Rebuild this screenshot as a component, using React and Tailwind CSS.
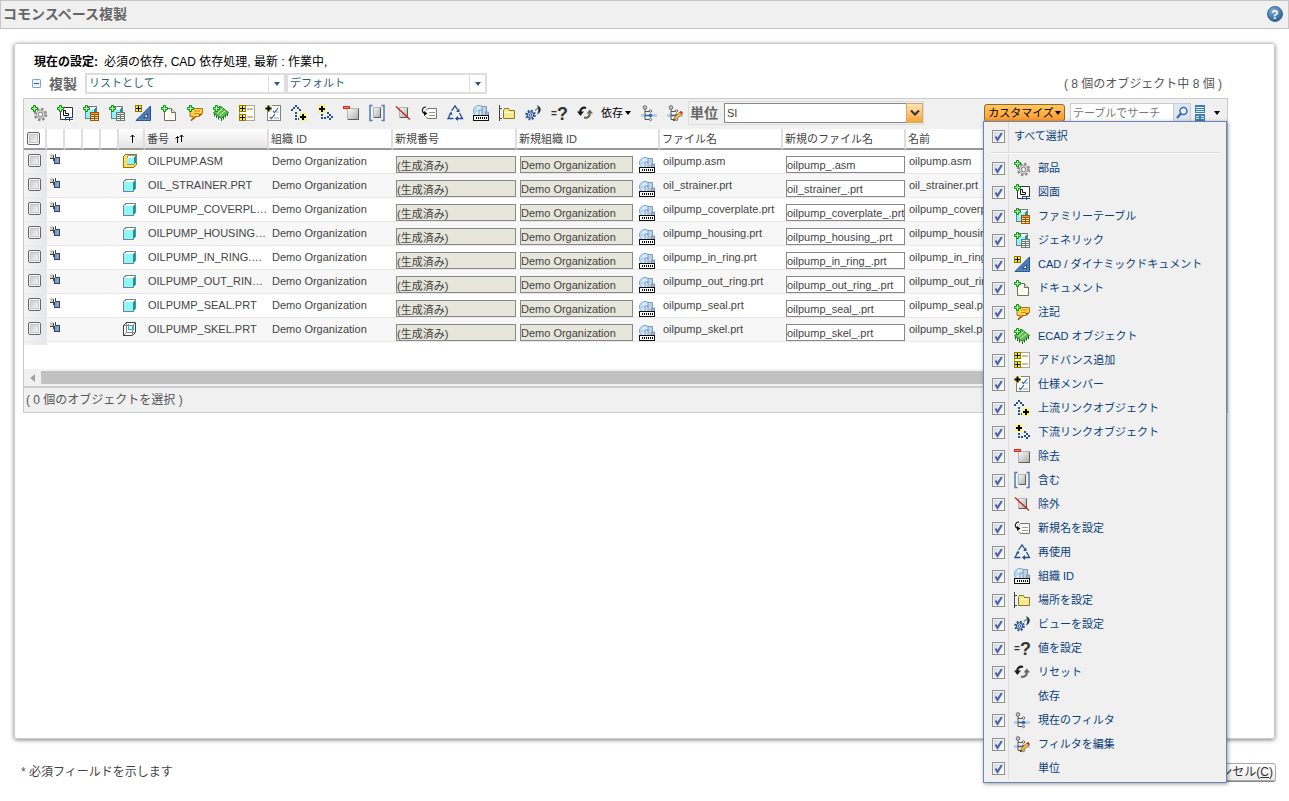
import { useState } from "react";

const GreenPlus = () => (
  <path d="M2.5.5h2v2h2v2h-2v2h-2v-2h-2v-2h2z" fill="#a5f58a" stroke="#0b8f1c" />
);

const YellowPlus = ({ y = 0 }) => (
  <g transform={`translate(0 ${y})`} shapeRendering="crispEdges">
    <rect width="7" height="7" fill="#8a7c00" />
    <rect x="1" y="1" width="5" height="5" fill="#ffee22" />
    <path d="M3 1h1v2h2v1H4v2H3V4H1V3h2z" fill="#000" />
  </g>
);

const Cube = () => (
  <g shapeRendering="crispEdges">
    <path d="M2 4l2-2h9v9l-2 2H2z" fill="#fff" />
    <path d="M3 5h8v8H3z" fill="#8ef6f8" />
    <path d="M11 4l2-2v9l-2 2z" fill="#0e9a9c" />
    <path d="M2.500 13.500V4.500L5 1.500h8.500V12M2 13.500h6" fill="none" stroke="#6d8080" />
  </g>
);

const Grid = ({ head, body, line }) => (
  <g shapeRendering="crispEdges">
    <rect x="7" y="7" width="9" height="9" fill={line} />
    <path d="M8 8h7v1H8z" fill={head} />
    <path d="M8 10h3v1H8zM12 10h3v1h-3zM8 12h3v1H8zM12 12h3v1h-3zM8 14h3v1H8zM12 14h3v1h-3z" fill={body} />
  </g>
);

const Box = ({ x = 5, y = 3, w = 9, h = 11 }) => (
  <g>
    <rect x={x} y={y} width={w} height={h} fill="url(#steel)" />
    <path d={`M${x} ${y + h - 0.5}h${w}M${x + w - 0.5} ${y}v${h}`} stroke="#5c5c5c" />
    <path d={`M${x + 0.5} ${y + h}V${y + 0.5}h${w}`} fill="none" stroke="#b5b5b5" />
  </g>
);

const FilterTree = () => (
  <g>
    <path d="M0 9h16v3H0z" fill="#b9cdea" />
    <path d="M4 4v10.500h4M4 6.500h4M4 10.500h4" fill="none" stroke="#555" />
    <circle cx="4" cy="2.500" r="1.800" fill="#ccc" stroke="#666" />
    <circle cx="9.500" cy="6" r="1.200" fill="#fff" stroke="#555" strokeWidth=".9" />
    <circle cx="9.500" cy="10.500" r="1.300" fill="#2f6fe0" stroke="#1d4fb8" />
    <circle cx="9.500" cy="14.500" r="1.100" fill="#fff" stroke="#555" strokeWidth=".9" />
  </g>
);

const glyphs = {
  part: (
    <>
      <circle cx="9.500" cy="9.500" r="5.500" fill="none" stroke="#8a8a8a" strokeWidth="2.400" strokeDasharray="2.300 2.020" />
      <circle cx="9.500" cy="9.500" r="4.300" fill="#d9d9d9" stroke="#999" />
      <circle cx="9.500" cy="9.500" r="2.200" fill="#fff" stroke="#777" />
      <GreenPlus />
    </>
  ),
  drawing: (
    <>
      <path d="M3.500 2.500h12v12h-12z" fill="#fff" stroke="#333" />
      <path d="M6.500 5v5.500h5V8.500H8.500V5.500H6" fill="none" stroke="#111" />
      <path d="M8 12h8v4H8z" fill="#fff" />
      <path d="M8 12.500h8M8.500 12v3.500M9 14.500h7M12.500 12v4" stroke="#17469e" />
      <GreenPlus />
    </>
  ),
  family: (
    <>
      <Cube />
      <Grid head="#f59a23" body="#fff3a8" line="#a3530c" />
      <GreenPlus />
    </>
  ),
  generic: (
    <>
      <Cube />
      <Grid head="#d9ddda" body="#fff" line="#6d7a74" />
      <GreenPlus />
    </>
  ),
  cad: (
    <>
      <path d="M15.500 1v14.500H1z" fill="#4d7cb8" stroke="#234f8f" />
      <path d="M12.500 8.500v4H8.500z" fill="#fff" stroke="#234f8f" />
      <path d="M4 15.500l1-1.500M7 15.500l1-1.500M10 15.500l1-1.500M13 15.500l1-1.500" stroke="#8fb2dd" strokeWidth=".7" />
      <YellowPlus />
    </>
  ),
  document: (
    <>
      <path d="M3.500 3.500h7l4 4v8h-11z" fill="#fffff4" stroke="#6e6e62" />
      <path d="M10.500 3.500v4h4" fill="#e4e4d4" stroke="#6e6e62" />
      <GreenPlus />
    </>
  ),
  note: (
    <>
      <path d="M3 3.500h12.500v5L12 11.500H9L4 16l2.500-4.500H3z" fill="#fbd04a" stroke="#b87412" />
      <path d="M4 15.500L9 11.500" stroke="#a7570b" strokeWidth="1.300" />
      <path d="M7 6h6M7 8.500h5" stroke="#c88a1c" strokeWidth=".9" />
      <path d="M12 11.500V9l3.500-.5z" fill="#8a4a08" />
      <GreenPlus />
    </>
  ),
  ecad: (
    <>
      <path d="M7 1l8.500 6.500-7 6L.5 8z" fill="#5cbc4e" stroke="#1d7a22" />
      <path d="M4 8.500l5.500-5M6.500 10.500l6-5" stroke="#d9f7cd" />
      <path d="M1.500 9v2.500M3.500 10.500V13M5.500 12v2.500M8.500 13.500v2.500M10.500 12v2.500M12.500 10v2.500M14.500 8.500V11" stroke="#176b1c" />
      <GreenPlus />
    </>
  ),
  advance: (
    <>
      <rect x=".5" y=".5" width="15" height="15" fill="#fffff0" stroke="#a9a99e" />
      <path d="M8 4h6M8 12h6" stroke="#aaa" strokeWidth="1.600" />
      <YellowPlus />
      <YellowPlus y={9} />
    </>
  ),
  spec: (
    <>
      <rect x="2.500" y=".5" width="13" height="15" fill="#fffff4" stroke="#83837a" />
      <path d="M8 6l1.500 1.500L13 3M5 12l1.500 1.500L10 9" fill="none" stroke="#2e67b1" strokeWidth="1.200" />
      <path d="M11 7h3M9 13h5" stroke="#89a7cf" />
      <path d="M0 0h7v7H0z" fill="#f3ef9b" />
      <path d="M2.500.5h2v2h2v2h-2v2h-2v-2h-2v-2h2z" fill="#000" />
    </>
  ),
  upstream: (
    <>
      <path d="M4 0h2v2H4zM2 2h2v2H2zM6 2h2v2H6zM0 4h2v2H0zM8 4h2v2H8zM4 7h2v2H4zM4 10h2v2H4zM4 13h2v2H4zM7 13h1v2H7z" fill="#22538f" />
      <path d="M8 8h8v8H8z" fill="#fbf48a" />
      <path d="M11 9h2v2h2v2h-2v2h-2v-2H9v-2h2z" fill="#000" />
    </>
  ),
  downstream: (
    <>
      <path d="M4 9h2v2H4zM4 12h2v2H4zM7 12h2v2H7zM10 11h2v2h-2zM10 7h2v2h-2zM12 9h2v2h-2zM14 11h2v2h-2zM12 13h2v2h-2z" fill="#22538f" />
      <path d="M1 0h8v8H1z" fill="#fbf48a" />
      <path d="M4 1h2v2h2v2H6v2H4V5H2V3h2z" fill="#000" />
    </>
  ),
  remove: (
    <>
      <Box x={4} y={3} w={12} h={12} />
      <path d="M0 1h7v3H0z" fill="#d92b1c" />
      <path d="M1 2h5v1H1z" fill="#ff7b6b" />
    </>
  ),
  include: (
    <>
      <Box x={4} y={2} w={8} h={11} />
      <path d="M3.500.5H1v15h2.500M12.500.5H15v15h-2.500" fill="none" stroke="#4d7cb0" strokeWidth="1.500" />
    </>
  ),
  exclude: (
    <>
      <Box x={4} y={2} w={9} h={11} />
      <path d="M1 1.500l14 13" stroke="#c8261c" strokeWidth="1.400" />
    </>
  ),
  rename: (
    <>
      <path d="M5 5.500L6.500 3.500h9v10h-9L5 11.500" fill="#fffff8" stroke="#777" />
      <path d="M8 7.500h6M8 10.500h6" stroke="#999" />
      <path d="M5 2C1 2 0 6.500 3.500 8.500" fill="none" stroke="#111" strokeWidth="1.100" />
      <path d="M3 6l3.500 2.500L3 11z" fill="#111" />
    </>
  ),
  reuse: (
    <>
      <path d="M4.500 6L8 1l3.500 5M12.500 8l3 5.500H9M6.500 13.500H1L4 7.500" fill="none" stroke="#1f4f93" strokeWidth="1.300" />
      <path d="M12.500 3.500v3.500H9zM11 11v5l-3-2.500zM2 9l2.500-2 1 3z" fill="#1f4f93" />
    </>
  ),
  org: (
    <>
      <circle cx="6" cy="6" r="5.500" fill="#d4ecfa" stroke="#7aa3c4" />
      <path d="M2 3c2 1 2 3 0 5M1 6h6" fill="none" stroke="#a9cde6" />
      <path d="M6 5h4v6H6z" fill="#d8e8f5" stroke="#6f90b3" strokeWidth=".9" />
      <path d="M9 1.500h4.500V11H9z" fill="#bfd2e6" stroke="#6f90b3" strokeWidth=".9" />
      <path d="M12.500 7h3v4h-3z" fill="#9fb7d1" stroke="#6f90b3" strokeWidth=".9" />
      <g shapeRendering="crispEdges">
        <rect x="0" y="10" width="16" height="6" fill="#111" />
        <rect x="1" y="11" width="14" height="4" fill="#fff" />
        <path d="M3 12h1v2H3zM5 12h1v2H5zM7 12h1v2H7zM9 12h1v2H9zM11 12h1v2h-1zM13 12h1v2h-1z" fill="#000" />
      </g>
    </>
  ),
  location: (
    <>
      <path d="M.5 0v16M0 3.500h3M0 13.500h3" fill="none" stroke="#444" />
      <path d="M4.500 5.500l1-2h4l1 2h5v8h-11z" fill="#f6e88b" stroke="#857a2e" />
      <path d="M5.500 7.500h9" stroke="#fffbd0" />
    </>
  ),
  view: (
    <>
      <circle cx="5.500" cy="10" r="4.300" fill="none" stroke="#254e86" strokeWidth="2" strokeDasharray="1.800 1.570" />
      <circle cx="5.500" cy="10" r="3.200" fill="#b5cbe6" stroke="#254e86" />
      <circle cx="5.500" cy="10" r="1.200" fill="#fff" stroke="#254e86" strokeWidth=".9" />
      <path d="M12 0c5 2 5 7 0 9.500 1.800-3.500 1.800-6 0-9.500z" fill="#2b3340" />
      <path d="M10 5.500l3-2.500" stroke="#5a88c4" strokeWidth="1.400" />
    </>
  ),
  value: (
    <>
      <text x="0" y="12" fontSize="10" fontWeight="bold" fill="#333">=</text>
      <text x="6" y="15" fontSize="18" fontWeight="bold" fill="#333">?</text>
    </>
  ),
  reset: (
    <>
      <path d="M9 3C5.500 2 3 4 3.200 7.500" fill="none" stroke="#1c1c1c" strokeWidth="2.200" />
      <path d="M0 6.500h7L3.400 11z" fill="#1c1c1c" />
      <path d="M7 12.500c3.500 1 6-1 5.800-4.500" fill="none" stroke="#676b60" strokeWidth="2.200" />
      <path d="M9.500 8.500H16L12.800 4.500z" fill="#676b60" />
    </>
  ),
  filter: <FilterTree />,
  editFilter: (
    <>
      <FilterTree />
      <path d="M6.500 15.500l1-3.500 6-5.500 2 2-6 5.500z" fill="#f9c43c" stroke="#8f5d0e" strokeWidth=".8" />
      <path d="M12.500 7.300l1.800-1.300 1.500 1.500-1.300 1.800z" fill="#d3331f" />
      <path d="M6 16l.7-2 1.500 1.400z" fill="#222" />
    </>
  ),
  assembly: (
    <g shapeRendering="crispEdges">
      <path d="M1.500 3.500l2-2h11v10l-3 3h-10z" fill="#ffdf5c" stroke="#a5700c" />
      <path d="M5 4l2-2h7v7l-2 2H5z" fill="#fff" stroke="#6f8a8c" strokeWidth=".8" />
      <path d="M5 5h7v6H5z" fill="#8ef6f8" />
      <path d="M12 4l2-2v7l-2 2z" fill="#0e9a9c" />
    </g>
  ),
  solid: (
    <g shapeRendering="crispEdges">
      <path d="M1 5l3-3h10l-3 3z" fill="#fff" />
      <path d="M1 5h10v9H1z" fill="#8ef6f8" />
      <path d="M11 5l3-3v9l-3 3z" fill="#0e9a9c" />
      <path d="M1.500 14V4.500l2.500-2h9.500V11l-2 3H1" fill="none" stroke="#6f8a8c" />
    </g>
  ),
  skeleton: (
    <g fill="none" shapeRendering="crispEdges">
      <path d="M1.500 4.500l3-3h9v10l-3 3h-9z" fill="#fff" stroke="#444" />
      <path d="M1.500 4.500h9v10M10.500 4.500l3-3M4.500 2v9h9M1.500 14.500l3-3" stroke="#888" />
      <path d="M6.500 3v5h5V4" stroke="#19c0c4" />
    </g>
  ),
};

const actions = [
  ["part", "部品"],
  ["drawing", "図面"],
  ["family", "ファミリーテーブル"],
  ["generic", "ジェネリック"],
  ["cad", "CAD / ダイナミックドキュメント"],
  ["document", "ドキュメント"],
  ["note", "注記"],
  ["ecad", "ECAD オブジェクト"],
  ["advance", "アドバンス追加"],
  ["spec", "仕様メンバー"],
  ["upstream", "上流リンクオブジェクト"],
  ["downstream", "下流リンクオブジェクト"],
  ["remove", "除去"],
  ["include", "含む"],
  ["exclude", "除外"],
  ["rename", "新規名を設定"],
  ["reuse", "再使用"],
  ["org", "組織 ID"],
  ["location", "場所を設定"],
  ["view", "ビューを設定"],
  ["value", "値を設定"],
  ["reset", "リセット"],
  [null, "依存"],
  ["filter", "現在のフィルタ"],
  ["editFilter", "フィルタを編集"],
  [null, "単位"],
];

const rows = [
  { number: "OILPUMP.ASM", file: "oilpump.asm", newFile: "oilpump_.asm", icon: "assembly" },
  { number: "OIL_STRAINER.PRT", file: "oil_strainer.prt", newFile: "oil_strainer_.prt", icon: "solid" },
  { number: "OILPUMP_COVERPLATE.PRT", file: "oilpump_coverplate.prt", newFile: "oilpump_coverplate_.prt", icon: "solid" },
  { number: "OILPUMP_HOUSING.PRT", file: "oilpump_housing.prt", newFile: "oilpump_housing_.prt", icon: "solid" },
  { number: "OILPUMP_IN_RING.PRT", file: "oilpump_in_ring.prt", newFile: "oilpump_in_ring_.prt", icon: "solid" },
  { number: "OILPUMP_OUT_RING.PRT", file: "oilpump_out_ring.prt", newFile: "oilpump_out_ring_.prt", icon: "solid" },
  { number: "OILPUMP_SEAL.PRT", file: "oilpump_seal.prt", newFile: "oilpump_seal_.prt", icon: "solid" },
  { number: "OILPUMP_SKEL.PRT", file: "oilpump_skel.prt", newFile: "oilpump_skel_.prt", icon: "skeleton" },
];

function Icon({ name }) {
  return (
    <svg viewBox="0 0 16 16" className="block size-4 shrink-0 overflow-visible" aria-hidden="true">
      {glyphs[name]}
    </svg>
  );
}

function Caret() {
  return <span className="block border-x-[3px] border-t-[4px] border-x-transparent border-t-current" />;
}

function RowCheckbox({ label }) {
  return (
    <input
      type="checkbox"
      aria-label={label}
      className="block size-[13px] appearance-none rounded-[2px] border border-[#666] bg-linear-to-br from-[#c4c4c4] to-white shadow-[inset_0_0_0_1px_#fff,inset_0_0_0_2px_#c4c4c4] checked:from-[#4b62a8]"
    />
  );
}

function MenuCheckbox({ id, checked, onChange }) {
  return (
    <span className="relative block size-[13px] shrink-0">
      <input
        type="checkbox"
        id={id}
        checked={checked}
        onChange={onChange}
        className="block size-full appearance-none border border-[#8e8f8f] bg-linear-to-br from-[#cfd3da] to-white shadow-[inset_0_0_0_1px_#f6f6f6]"
      />
      {checked && (
        <svg viewBox="0 0 13 13" className="pointer-events-none absolute inset-0" aria-hidden="true">
          <path d="M3.500 6.500l2 3.500L9.800 3" fill="none" stroke="#4b61a4" strokeWidth="2" />
        </svg>
      )}
    </span>
  );
}

function PlainSelect({ label, value }) {
  return (
    <div className="relative h-[21px] w-[201px] border-2 border-[#ddd] bg-white">
      <select aria-label={label} className="block size-full appearance-none px-0.5 text-[11px] leading-[17px] text-[#2b5d7c]">
        <option>{value}</option>
      </select>
      <span className="pointer-events-none absolute inset-y-0 right-0 grid w-4 place-items-center border-l border-[#ddd] text-[#2b5d7c]">
        <Caret />
      </span>
    </div>
  );
}

function CustomizeMenu() {
  const [hidden, setHidden] = useState([]);

  const toggle = (label) =>
    setHidden(hidden.includes(label) ? hidden.filter((l) => l !== label) : [...hidden, label]);
  const toggleAll = () => setHidden(hidden.length ? [] : actions.map(([, label]) => label));

  return (
    <div className="absolute top-full -left-px z-20 -mt-px w-[244px] border border-[#6a86b8] bg-[#f0f0f0] pb-0.5 text-[11px] text-[#0a3f7a] shadow-[1px_1px_4px_rgba(0,0,0,0.4)]">
      <div className="flex h-7 items-center">
        <span className="flex h-full w-[25px] items-center border-r border-[#dcdcdc] pl-2">
          <MenuCheckbox id="all" checked={!hidden.length} onChange={toggleAll} />
        </span>
        <label htmlFor="all" className="pl-[5px]">すべて選択</label>
      </div>
      <div className="flex h-[6px]">
        <span className="w-[25px] border-r border-[#dcdcdc]" />
        <span className="mt-0.5 mr-1.5 -ml-[18px] h-0.5 flex-1 border-t border-b border-t-[#dcdcdc] border-b-white" />
      </div>
      {actions.map(([icon, label], i) => (
        <div key={label} className="flex h-6 items-center">
          <span className="flex h-full w-[25px] items-center border-r border-[#dcdcdc] pl-2">
            <MenuCheckbox id={`action-${i}`} checked={!hidden.includes(label)} onChange={() => toggle(label)} />
          </span>
          <label htmlFor={`action-${i}`} className="flex items-center gap-2 pl-[5px]">
            <Icon name={icon} />
            {label}
          </label>
        </div>
      ))}
    </div>
  );
}

function Toolbar() {
  const [open, setOpen] = useState(true);
  const tools = actions.slice(0, 22);

  return (
    <div className="flex h-[30px] items-center bg-[#f0f0f0] pr-[7px] pb-0.5 pl-0.5">
      {tools.map(([icon, label]) => (
        <button key={label} aria-label={label} className="grid h-6 w-[26px] shrink-0 place-items-center">
          <Icon name={icon} />
        </button>
      ))}
      <button className="flex h-6 w-[38px] shrink-0 items-center gap-0.5 pl-[3px] text-[11px] text-black">
        依存
        <Caret />
      </button>
      {actions.slice(23, 25).map(([icon, label]) => (
        <button key={label} aria-label={label} className="grid h-6 w-[26px] shrink-0 place-items-center">
          <Icon name={icon} />
        </button>
      ))}
      <div className="flex h-6 w-[236px] items-center border border-[#ddd]">
        <label htmlFor="unit" className="w-[35px] shrink-0 pl-px text-sm font-bold text-[#666]">単位</label>
        <div className="relative h-5 flex-1">
          <select id="unit" className="block size-full appearance-none border border-[#888] bg-white px-0.5 text-[11px] text-[#444]">
            <option>SI</option>
          </select>
          <span className="pointer-events-none absolute inset-y-0 right-0 grid w-[17px] place-items-center border border-[#d8a860] bg-linear-to-b from-[#ffe3b3] to-[#f9a52e]">
            <svg viewBox="0 0 10 8" className="h-2 w-2.5" aria-hidden="true">
              <path d="M1 1.500l4 4 4-4" fill="none" stroke="#333" strokeWidth="2" />
            </svg>
          </span>
        </div>
      </div>

      <div className="relative ml-auto w-[81px] shrink-0">
        <button
          onClick={() => setOpen(!open)}
          className="flex h-[18px] w-full items-center justify-center gap-px rounded-[3px] border border-[#8a6a2e] bg-linear-to-b from-[#ffc65c] to-[#fb9a2b] text-[11px] text-black"
        >
          カスタマイズ
          <Caret />
        </button>
        {open && <CustomizeMenu />}
      </div>
      <div className="ml-[5px] flex h-5 w-[121px] shrink-0 border border-[#ccc] bg-white">
        <input
          type="text"
          aria-label="テーブルでサーチ"
          placeholder="テーブルでサーチ"
          className="w-0 flex-1 pl-0.5 text-[11px] leading-4 placeholder:text-[#777]"
        />
        <button aria-label="サーチ" className="grid w-[17px] place-items-center border-l border-[#ccc] bg-[#dde6f1]">
          <svg viewBox="0 0 14 14" className="size-3.5" aria-hidden="true">
            <path d="M2 12l4-4.500" stroke="#3f6da8" strokeWidth="2.400" />
            <circle cx="8.500" cy="5" r="3.500" fill="#e8f3fd" stroke="#3f6da8" strokeWidth="1.500" />
          </svg>
        </button>
      </div>
      <button aria-label="テーブルビュー" className="ml-1 flex h-[18px] shrink-0 items-center gap-2 text-black">
        <svg viewBox="0 0 11 16" className="h-4 w-[11px]" shapeRendering="crispEdges" aria-hidden="true">
          <path d="M0 0h10v8H0zM0 9h10v7H0z" fill="#3f7fae" />
          <path d="M1 2h8v1H1zM1 4h8v1H1zM1 6h8v1H1zM1 11h3v1H1zM6 11h3v1H6zM1 13h3v1H1zM6 13h3v1H6z" fill="#d6eaf7" />
        </svg>
        <Caret />
      </button>
    </div>
  );
}

function HeadCell({ children, sorted }) {
  return (
    <th
      className={`h-[21px] overflow-hidden border-r-2 border-b-2 border-r-[#dedede] border-b-[#999] p-0 pl-0.5 text-left align-middle font-normal whitespace-nowrap ${
        sorted ? "bg-linear-to-b from-white to-[#e4e4e4]" : "bg-white"
      }`}
    >
      {children}
    </th>
  );
}

function SortArrow({ double }) {
  return (
    <svg viewBox="0 0 9 9" className="inline-block size-[9px]" aria-hidden="true">
      <path d={double ? "M2.500 9V3M.5 4.500l2-2 1.500 1.500M6.500 8V1M4.500 3l2-2 2 2" : "M4.500 9V1M2.500 3l2-2 2 2"} fill="none" stroke="#000" />
    </svg>
  );
}

function ObjectTable() {
  const field = "mt-1.5 ml-[3px] block h-[17px] border border-[#888] text-[11px] leading-[15px] text-[#444]";

  return (
    <div className="overflow-hidden bg-white">
      <table className="w-full table-fixed border-separate border-spacing-0 text-[11px] leading-[22px] text-[#444]">
        <colgroup>
          <col className="w-[23px]" />
          <col className="w-[18px]" />
          <col className="w-[18px]" />
          <col className="w-[18px]" />
          <col className="w-[18px]" />
          <col className="w-[26px]" />
          <col className="w-[124px]" />
          <col className="w-[124px]" />
          <col className="w-[124px]" />
          <col className="w-[143px]" />
          <col className="w-[123px]" />
          <col className="w-[123px]" />
          <col />
        </colgroup>
        <thead>
          <tr className="leading-[18px]">
            <HeadCell><div className="pl-px"><RowCheckbox label="すべて選択" /></div></HeadCell>
            <HeadCell />
            <HeadCell />
            <HeadCell />
            <HeadCell />
            <HeadCell sorted><span className="flex justify-center"><SortArrow /></span></HeadCell>
            <HeadCell sorted>
              <span className="flex items-center gap-1.5">番号 <SortArrow double /></span>
            </HeadCell>
            <HeadCell>組織 ID</HeadCell>
            <HeadCell>新規番号</HeadCell>
            <HeadCell>新規組織 ID</HeadCell>
            <HeadCell>ファイル名</HeadCell>
            <HeadCell>新規のファイル名</HeadCell>
            <HeadCell>名前</HeadCell>
          </tr>
        </thead>
        <tbody>
          {rows.map((row) => (
            <tr key={row.number} className="even:bg-[#f7f7f7] [&>td]:h-6 [&>td]:border-b [&>td]:border-[#e8e8e8] [&>td]:p-0 [&>td]:align-top">
              <td className="border-r bg-linear-to-r from-[#f4f4f4] to-[#e6e7ea]">
                <div className="pt-1 pl-1"><RowCheckbox label={row.number} /></div>
              </td>
              <td>
                <svg viewBox="0 0 10 10" className="mt-1 ml-[3px] block size-2.5" shapeRendering="crispEdges" aria-hidden="true">
                  <path d="M0 0h3v4H0z" fill="#c9cdb9" />
                  <path d="M0 4h4v1H0zM3 1h1v6H3z" fill="#444" />
                  <path d="M5 4h4v5H5z" fill="#7f9ccc" />
                  <path d="M4 9h6v1H4zM9 3h1v7H9zM5 3h4v1H5zM5 0h1v4H5zM4 4h1v5H4z" fill="#35435c" />
                </svg>
              </td>
              <td />
              <td />
              <td />
              <td><div className="pt-[3px] pl-[3px]"><Icon name={row.icon} /></div></td>
              <td><div className="truncate pl-[3px]">{row.number}</div></td>
              <td><div className="truncate pl-[3px]">Demo Organization</div></td>
              <td><input type="text" readOnly aria-label="新規番号" value="(生成済み)" className={`${field} w-[120px] bg-[#e6e6da]`} /></td>
              <td>
                <div className="flex">
                  <input type="text" readOnly aria-label="新規組織 ID" value="Demo Organization" className={`${field} w-[113px] bg-[#e6e6da]`} />
                  <button aria-label="組織 ID" className="mt-[7px] ml-1.5 h-4"><Icon name="org" /></button>
                </div>
              </td>
              <td><div className="truncate pl-[3px]">{row.file}</div></td>
              <td><input type="text" defaultValue={row.newFile} aria-label="新規のファイル名" className={`${field} w-[119px] bg-white`} /></td>
              <td><div className="truncate pl-[3px]">{row.file}</div></td>
            </tr>
          ))}
        </tbody>
      </table>
      <div className="h-[27px]">
        <div className="h-[3px] w-[23px] bg-linear-to-r from-[#f4f4f4] to-[#e6e7ea]" />
      </div>
      <div className="flex h-[17px] items-center bg-[#f1f1f1] px-1.5 text-[#a3a3a3]">
        <span className="mr-1.5 border-y-[4px] border-r-[5px] border-y-transparent border-r-current" />
        <div className="h-[13px] flex-1 bg-[#c1c1c1]" />
      </div>
    </div>
  );
}

export default function App() {
  return (
    <div className="flex min-h-screen flex-col bg-white font-['Liberation_Sans','Noto_Sans_CJK_JP',sans-serif] text-xs">
      <svg className="absolute size-0" aria-hidden="true">
        <defs>
          <linearGradient id="steel" x1="0" y1="0" x2="1" y2="1">
            <stop offset="0" stopColor="#fff" />
            <stop offset="1" stopColor="#a8a8a8" />
          </linearGradient>
          <radialGradient id="help" cx=".4" cy=".3" r=".8">
            <stop offset="0" stopColor="#7fb0dc" />
            <stop offset="1" stopColor="#1f5490" />
          </radialGradient>
        </defs>
      </svg>

      <header className="flex h-[29px] items-center justify-between border border-[#c6c6c6] bg-[#f0f0f0] pr-[5px] pb-0.5 pl-0.5">
        <h1 className="text-sm font-bold text-[#666]">コモンスペース複製</h1>
        <button aria-label="ヘルプ">
          <svg viewBox="0 0 16 16" className="block size-4" aria-hidden="true">
            <circle cx="8" cy="8" r="7.500" fill="url(#help)" stroke="#3c6a9c" />
            <text x="8" y="12.500" fontSize="12" fontWeight="bold" textAnchor="middle" fill="#fff">?</text>
          </svg>
        </button>
      </header>

      <main className="mx-3.5 mt-3.5 flex-1 rounded-[3px] border border-[#ccc] px-2 pt-2.5 shadow-[0_1px_4px_rgba(0,0,0,0.5)]">
        <div className="mr-[38px]">
          <p className="pl-[11px] leading-4 text-black">
            <b className="mr-1.5">現在の設定:</b>
            必須の依存, CAD 依存処理, 最新 : 作業中,
          </p>
          <div className="mt-[3px] mb-1 flex h-[21px] items-center pr-1.5 pl-[9px]">
            <button aria-label="折りたたむ" className="grid size-[9px] place-items-center rounded-[1px] border border-[#7fa9cc] bg-[#eaf3fa]">
              <span className="h-px w-[5px] bg-[#2b5d8c]" />
            </button>
            <h2 className="mr-2 ml-2 text-sm font-bold text-[#666]">複製</h2>
            <PlainSelect label="表示" value="リストとして" />
            <PlainSelect label="ビュー" value="デフォルト" />
            <span className="ml-auto text-[#555]">( 8 個のオブジェクト中 8 個 )</span>
          </div>

          <section className="border border-[#ccc]">
            <Toolbar />
            <ObjectTable />
            <div className="h-[26px] border-t-2 border-[#ccc] bg-[#f0f0f0] pl-0.5 leading-6 text-[#555]">
              ( 0 個のオブジェクトを選択 )
            </div>
          </section>
        </div>
      </main>

      <footer className="flex h-[62px] items-center justify-between pt-1 pr-[13px] pl-[21px] text-[#444]">
        <span><span className="text-[#2b5d8c]">*</span> 必須フィールドを示します</span>
        <button className="h-[18px] rounded-[3px] border border-[#aaa] bg-linear-to-b from-white to-[#ececec] px-0.5 leading-4 text-[#333] shadow-[0_1px_0_#888]">
          キャンセル(<u>C</u>)
        </button>
      </footer>
    </div>
  );
}
